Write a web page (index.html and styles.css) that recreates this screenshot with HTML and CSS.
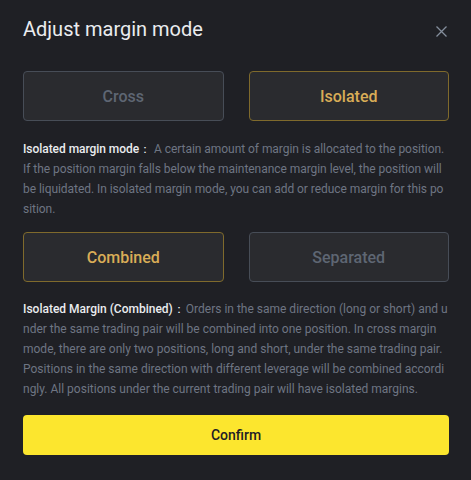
FILE: index.html
```html
<!DOCTYPE html>
<html lang="en">
<head>
    <meta charset="UTF-8">
    <meta name="viewport" content="width=device-width, initial-scale=1.0">
    <title>Adjust margin mode</title>
    <link rel="stylesheet" href="styles.css">
</head>
<body>
    <div class="dialog">
        <div class="dialog-header">
            <h1>Adjust margin mode</h1>
            <button class="close-btn" aria-label="Close">
                <svg width="11" height="11" viewBox="0 0 11 11">
                    <path d="M0.5 0.5 L10.5 10.5 M10.5 0.5 L0.5 10.5" stroke="#848e9c" stroke-width="1.3" fill="none"/>
                </svg>
            </button>
        </div>

        <div class="option-row">
            <button class="option">Cross</button>
            <button class="option active">Isolated</button>
        </div>

        <p class="desc">
            <span class="desc-label">Isolated margin mode：</span>A certain amount of margin is allocated to the position. If the position margin falls below the maintenance margin level, the position will be liquidated. In isolated margin mode, you can add or reduce margin for this position.
        </p>

        <div class="option-row">
            <button class="option active">Combined</button>
            <button class="option">Separated</button>
        </div>

        <p class="desc desc-last">
            <span class="desc-label">Isolated Margin (Combined)：</span>Orders in the same direction (long or short) and under the same trading pair will be combined into one position. In cross margin mode, there are only two positions, long and short, under the same trading pair. Positions in the same direction with different leverage will be combined accordingly. All positions under the current trading pair will have isolated margins.
        </p>

        <button class="confirm-btn">Confirm</button>
    </div>
</body>
</html>
```

FILE: styles.css
```css
body {
    margin: 0;
    background-color: #1f2025;
    font-family: Roboto, "Liberation Sans", sans-serif;
}

.dialog {
    width: 471px;
    height: 480px;
    box-sizing: border-box;
    padding: 18px 22px 0 23px;
    background-color: #1f2025;
}

.dialog-header {
    display: flex;
    justify-content: space-between;
    align-items: center;
    height: 22px;
    margin-bottom: 31px;
}

h1 {
    margin: 0;
    color: #eaecef;
    font-size: 20px;
    font-weight: 400;
    line-height: 22px;
}

.close-btn {
    background: none;
    border: none;
    padding: 0;
    margin-right: 2px;
    margin-top: 4px;
    display: flex;
}

.option-row {
    display: flex;
    gap: 25px;
}

.option {
    flex: 1;
    height: 50px;
    background-color: #2a2b2f;
    border: 1px solid #474d57;
    border-radius: 4px;
    color: #5e6673;
    font-family: inherit;
    font-size: 16px;
    font-weight: 500;
}

.option.active {
    border-color: #7f6a2c;
    color: #d9ad57;
}

.desc {
    margin: 18px 0 13px;
    color: #6e7583;
    font-size: 12px;
    line-height: 20px;
    letter-spacing: -0.05px;
    word-break: break-all;
}

.desc-label {
    color: #eaecef;
    font-weight: 500;
    margin-right: 3px;
}

.desc-last {
    margin: 17px 0 16px;
    letter-spacing: 0;
}

.desc-last .desc-label {
    margin-right: 1px;
}

.confirm-btn {
    width: 100%;
    height: 40px;
    background-color: #fce62e;
    border: none;
    border-radius: 4px;
    color: #1e2026;
    font-family: inherit;
    font-size: 14px;
    font-weight: 500;
}
```
